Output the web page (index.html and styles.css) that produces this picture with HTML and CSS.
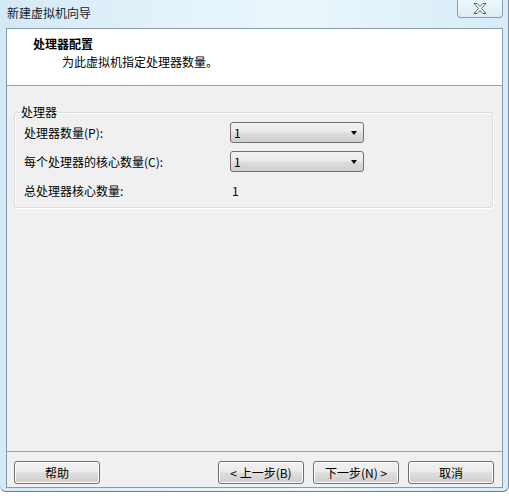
FILE: index.html
```html
<!DOCTYPE html>
<html lang="zh-CN">
<head>
<meta charset="utf-8">
<title>新建虚拟机向导</title>
<link rel="stylesheet" href="styles.css">
</head>
<body>
<div class="window">
  <div class="titlebar">
    <div class="title">新建虚拟机向导</div>
    <div class="close">
      <svg width="14" height="11" viewBox="0 0 14 11"><polygon points="1,0.5 4,0.5 7,3.5 10,0.5 13,0.5 8.5,5.5 13,10.5 10,10.5 7,7.5 4,10.5 1,10.5 5.5,5.5" fill="#fff" stroke="#505a64" stroke-width="1" stroke-linejoin="round"/></svg>
    </div>
  </div>
  <div class="client">
    <div class="header">
      <div class="h-title">处理器配置</div>
      <div class="h-sub">为此虚拟机指定处理器数量。</div>
    </div>
    <div class="content">
      <fieldset class="group">
        <legend class="group-label">处理器</legend>
        <div class="rows">
          <div class="lbl">处理器数量(P):</div>
          <div class="combo"><span>1</span><i class="arrow"></i></div>
          <div class="lbl">每个处理器的核心数量(C):</div>
          <div class="combo"><span>1</span><i class="arrow"></i></div>
          <div class="lbl">总处理器核心数量:</div>
          <div class="val">1</div>
        </div>
      </fieldset>
    </div>
    <div class="footer">
      <button class="btn">帮助</button>
      <div class="spacer"></div>
      <button class="btn">&lt; 上一步(B)</button>
      <button class="btn">下一步(N) &gt;</button>
      <button class="btn cancel">取消</button>
    </div>
  </div>
</div>
</body>
</html>
```

FILE: styles.css
```css
html, body {
  margin: 0;
  padding: 0;
}
body {
  width: 509px;
  height: 499px;
  overflow: hidden;
  background: #ffffff;
  font-family: "Noto Sans CJK SC", "Liberation Sans", sans-serif;
  font-size: 12px;
  color: #000;
}
.window {
  box-sizing: border-box;
  height: 492px;
  padding: 0 5px 3px 6px;
  background: linear-gradient(90deg, #d3e9f6 0%, #e4f3fb 35%, #eaf6fc 60%, #d6ecf8 100%);
  border-right: 1px solid #7d8b98;
  border-bottom: 1px solid #6f7d8a;
  border-radius: 0 0 6px 6px;
  display: flex;
  flex-direction: column;
}
.titlebar {
  height: 28px;
  display: flex;
  align-items: flex-start;
  flex: none;
}
.title {
  margin-top: 5px;
  padding-left: 1px;
  line-height: 16px;
  color: #1a1a1a;
}
.close {
  margin-left: auto;
  width: 46px;
  height: 18px;
  box-sizing: border-box;
  border: 1px solid #8e9dac;
  border-top: none;
  border-radius: 0 0 4px 4px;
  background: linear-gradient(#eef7fc, #dcecf6);
  display: flex;
  align-items: center;
  justify-content: center;
}
.close svg {
  display: block;
  margin-top: -1px;
}
.client {
  flex: 1;
  border: 1px solid #8a9aa9;
  background: #f0f0f0;
  display: flex;
  flex-direction: column;
  min-height: 0;
}
.header {
  height: 49px;
  flex: none;
  background: #ffffff;
  border-bottom: 1px solid #a0a0a0;
  padding-top: 7px;
  box-sizing: content-box;
}
.h-title {
  font-weight: bold;
  line-height: 16px;
  padding-left: 26px;
}
.h-sub {
  margin-top: 2px;
  line-height: 16px;
  padding-left: 55px;
}
.content {
  flex: 1;
  padding: 19px 9px 0 7px;
}
.group {
  margin: 0;
  height: 103px;
  box-sizing: border-box;
  border: 1px solid #d5dfe5;
  border-radius: 3px;
  box-shadow: inset 1px 1px 0 #ffffff, 1px 1px 0 #ffffff;
  padding: 3px 0 0 9px;
}
.group-label {
  padding: 0 1px;
  margin-left: -4px;
  line-height: 14px;
}
.rows {
  display: grid;
  grid-template-columns: 206px 134px;
  grid-auto-rows: 21px;
  row-gap: 8px;
  align-items: center;
}
.lbl, .val {
  line-height: 16px;
}
.val {
  padding-left: 2px;
}
.combo {
  height: 21px;
  box-sizing: border-box;
  border: 1px solid #707070;
  border-radius: 3px;
  background: linear-gradient(#f2f2f2 0%, #ebebeb 45%, #dddddd 55%, #cfcfcf 100%);
  display: flex;
  align-items: center;
  padding: 0 6px 0 3px;
  line-height: 16px;
}
.combo span {
  flex: 1;
}
.arrow {
  width: 0;
  height: 0;
  border-left: 3.5px solid transparent;
  border-right: 3.5px solid transparent;
  border-top: 4px solid #000;
}
.footer {
  flex: none;
  height: 36px;
  box-sizing: border-box;
  border-top: 1px solid #a0a0a0;
  padding: 9px 8px 0 7px;
  display: flex;
  align-items: flex-start;
  gap: 9px;
}
.spacer {
  flex: 1;
}
.btn {
  width: 86px;
  height: 23px;
  box-sizing: border-box;
  border: 1px solid #707070;
  border-radius: 3px;
  background: linear-gradient(#f2f2f2 0%, #ebebeb 45%, #dddddd 55%, #cfcfcf 100%);
  box-shadow: inset 0 0 0 1px #fbfbfb;
  font-family: "Noto Sans CJK SC", "Liberation Sans", sans-serif;
  font-size: 12px;
  color: #000;
  padding: 0;
  margin: 0;
  line-height: 16px;
}
```
